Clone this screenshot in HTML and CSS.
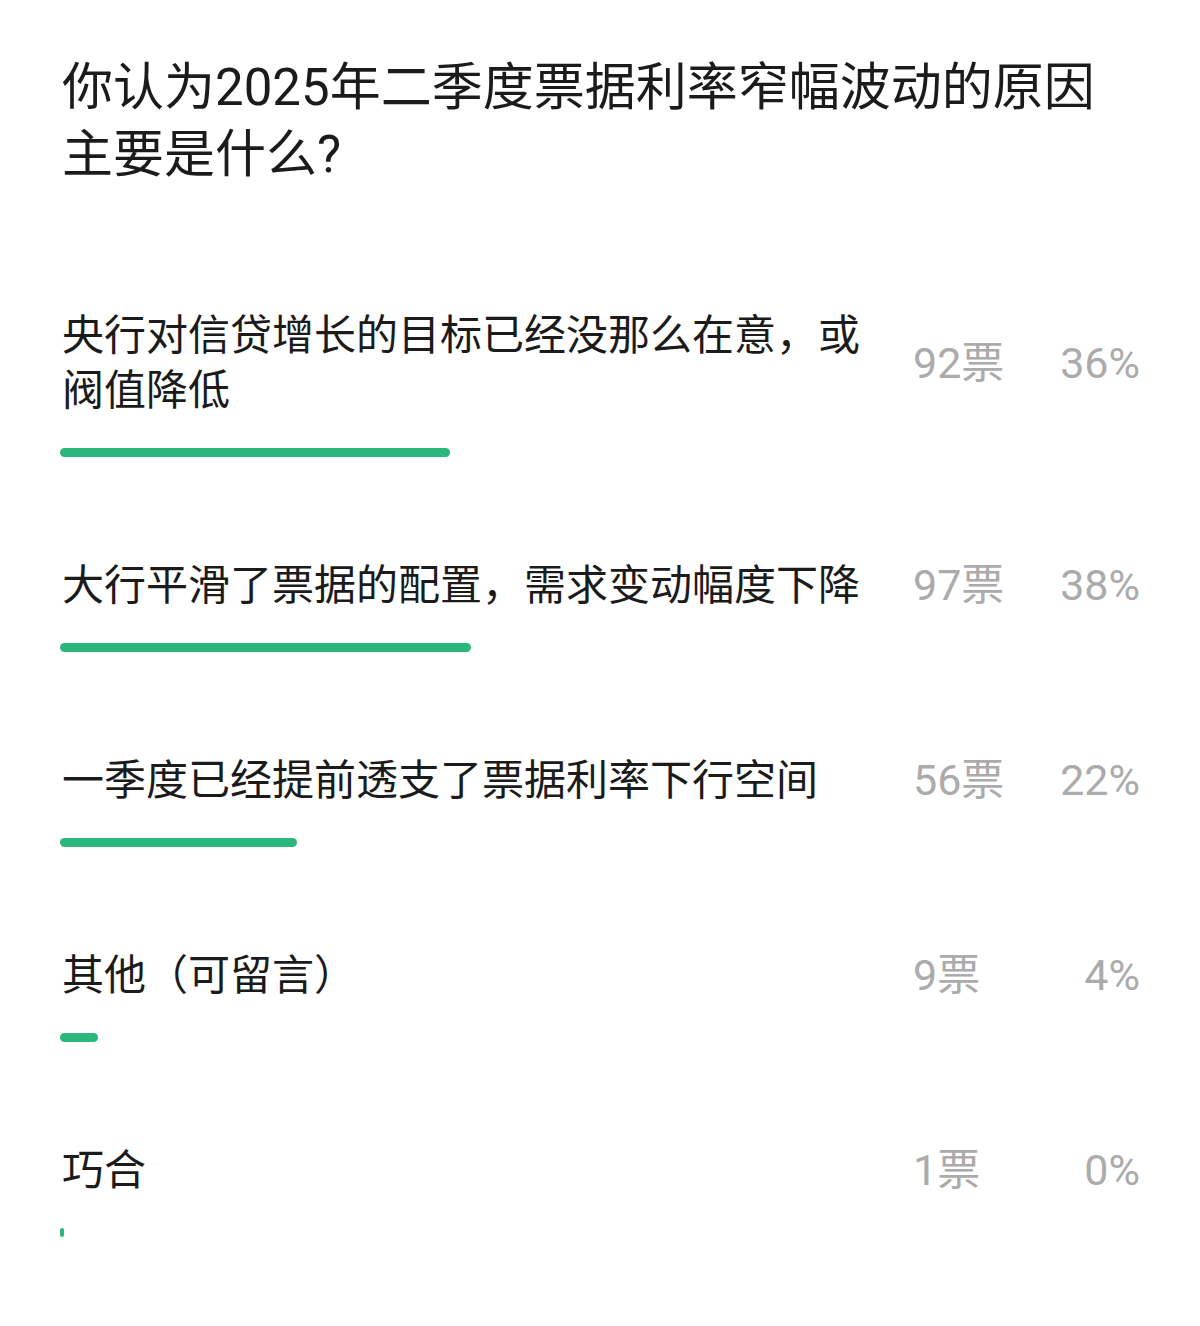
FILE: index.html
```html
<!DOCTYPE html>
<html lang="zh-CN">
<head>
<meta charset="utf-8">
<title>投票</title>
<link rel="stylesheet" href="styles.css">
</head>
<body>
<main class="poll">
  <h1 class="poll-title">你认为2025年二季度票据利率窄幅波动的原因主要是什么?</h1>
  <ul class="options">
    <li class="option">
      <div class="option-row">
        <div class="option-text">央行对信贷增长的目标已经没那么在意，或阀值降低</div>
        <div class="option-stats"><span class="votes">92票</span><span class="percent">36%</span></div>
      </div>
      <div class="bar-track"><div class="bar" style="width:36.08%"></div></div>
    </li>
    <li class="option">
      <div class="option-row">
        <div class="option-text">大行平滑了票据的配置，需求变动幅度下降</div>
        <div class="option-stats"><span class="votes">97票</span><span class="percent">38%</span></div>
      </div>
      <div class="bar-track"><div class="bar" style="width:38.04%"></div></div>
    </li>
    <li class="option">
      <div class="option-row">
        <div class="option-text">一季度已经提前透支了票据利率下行空间</div>
        <div class="option-stats"><span class="votes">56票</span><span class="percent">22%</span></div>
      </div>
      <div class="bar-track"><div class="bar" style="width:21.96%"></div></div>
    </li>
    <li class="option">
      <div class="option-row">
        <div class="option-text">其他（可留言）</div>
        <div class="option-stats"><span class="votes">9票</span><span class="percent">4%</span></div>
      </div>
      <div class="bar-track"><div class="bar" style="width:3.53%"></div></div>
    </li>
    <li class="option">
      <div class="option-row">
        <div class="option-text">巧合</div>
        <div class="option-stats"><span class="votes">1票</span><span class="percent">0%</span></div>
      </div>
      <div class="bar-track"><div class="bar" style="width:0.39%"></div></div>
    </li>
  </ul>
</main>
</body>
</html>
```
FILE: styles.css
```css
html, body {
  margin: 0;
  padding: 0;
  background: #ffffff;
}

body {
  font-family: Roboto, "Noto Sans CJK SC", sans-serif;
  color: #1b1b1b;
}

.poll {
  padding: 54px 60px 0 60px;
}

.poll-title {
  margin: 0;
  font-size: 51px;
  line-height: 67px;
  font-weight: 400;
  padding-left: 2px;
  width: 1060px;
}

.options {
  list-style: none;
  margin: 120px 0 0 0;
  padding: 0;
  display: flex;
  flex-direction: column;
  gap: 101px;
}

.option-row {
  display: flex;
  align-items: center;
}

.option-text {
  width: 810px;
  padding-left: 2px;
  font-size: 42px;
  line-height: 55px;
  margin-right: 41px;
}

.option-stats {
  flex: 1;
  display: flex;
  justify-content: space-between;
  align-items: center;
  font-size: 43px;
  line-height: 55px;
  color: #ababab;
}

.bar-track {
  margin-top: 30px;
  height: 9px;
}

.bar {
  height: 9px;
  border-radius: 5px;
  background: #2bb67b;
}
```
